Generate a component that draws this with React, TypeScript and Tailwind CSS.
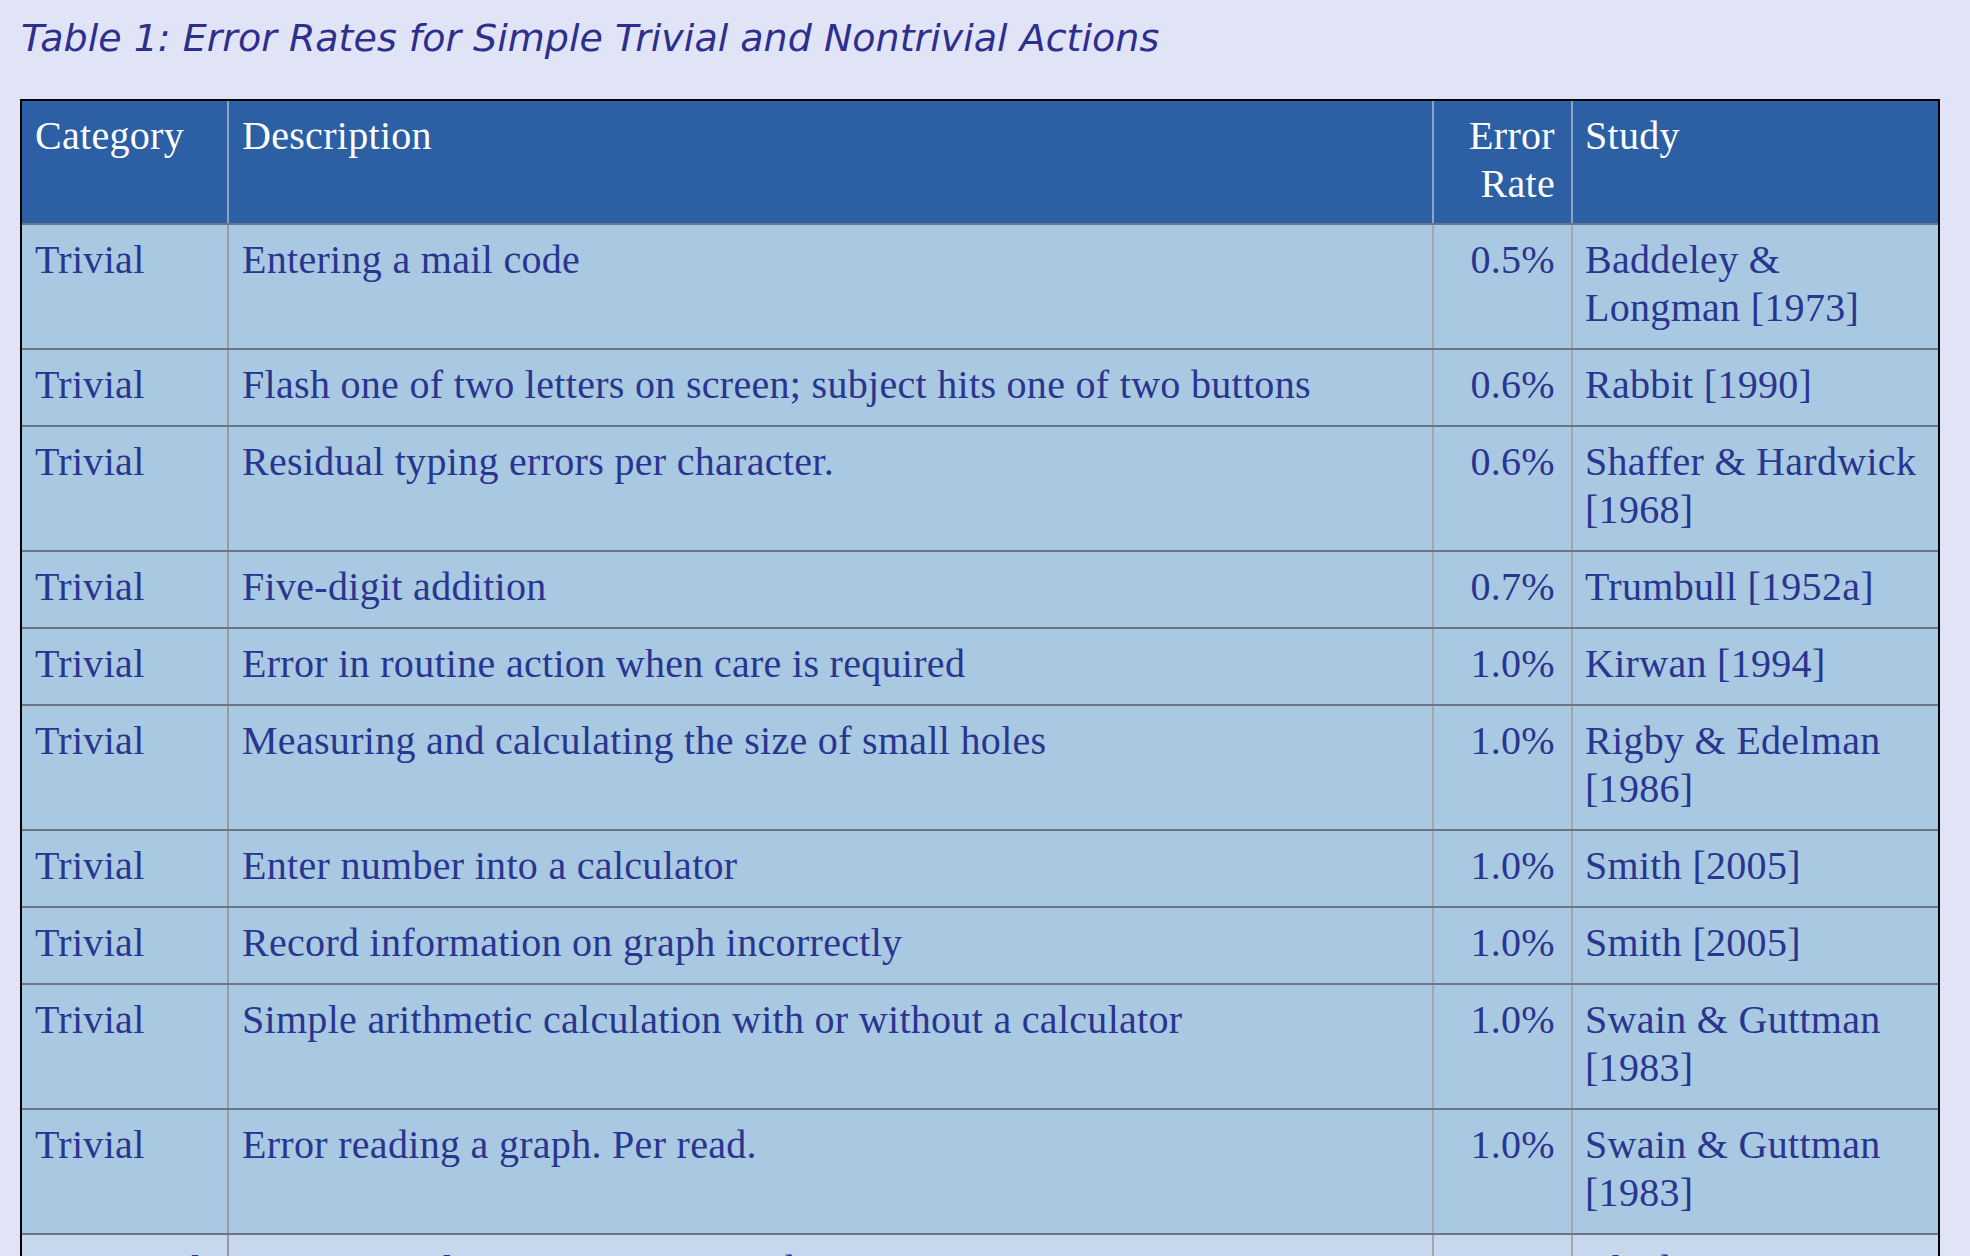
import React from "react";

type Row = { cat: string; desc: string; rate: string; study: React.ReactNode; tone?: "light" };

const rows: Row[] = [
  { cat: "Trivial", desc: "Entering a mail code", rate: "0.5%", study: <>Baddeley &amp;<br />Longman [1973]</> },
  { cat: "Trivial", desc: "Flash one of two letters on screen; subject hits one of two buttons", rate: "0.6%", study: "Rabbit [1990]" },
  { cat: "Trivial", desc: "Residual typing errors per character.", rate: "0.6%", study: <>Shaffer &amp; Hardwick<br />[1968]</> },
  { cat: "Trivial", desc: "Five-digit addition", rate: "0.7%", study: "Trumbull [1952a]" },
  { cat: "Trivial", desc: "Error in routine action when care is required", rate: "1.0%", study: "Kirwan [1994]" },
  { cat: "Trivial", desc: "Measuring and calculating the size of small holes", rate: "1.0%", study: <>Rigby &amp; Edelman<br />[1986]</> },
  { cat: "Trivial", desc: "Enter number into a calculator", rate: "1.0%", study: "Smith [2005]" },
  { cat: "Trivial", desc: "Record information on graph incorrectly", rate: "1.0%", study: "Smith [2005]" },
  { cat: "Trivial", desc: "Simple arithmetic calculation with or without a calculator", rate: "1.0%", study: <>Swain &amp; Guttman<br />[1983]</> },
  { cat: "Trivial", desc: "Error reading a graph. Per read.", rate: "1.0%", study: <>Swain &amp; Guttman<br />[1983]</> },
  { cat: "Nontrivial", desc: "Grammatical errors, one per word", rate: "1.1%", study: <>Chedru &amp;<br />Geschwind [1972]</>, tone: "light" },
];

const serif = { fontFamily: '"Liberation Serif", "Times New Roman", serif' };

export default function App() {
  return (
    <div className="min-h-[1256px] w-[1970px] overflow-hidden bg-[#e1e4f7]">
      <h1
        className="pl-[21px] pt-[16px] text-[38px] leading-[44px] italic font-normal text-[#2e2f8c]"
        style={{ fontFamily: '"DejaVu Sans", Verdana, sans-serif' }}
      >
        Table 1: Error Rates for Simple Trivial and Nontrivial Actions
      </h1>

      <div className="ml-[20px] mt-[39px] w-[1920px] border-2 border-black" style={serif}>
        <div className="grid grid-cols-[205px_1205px_139px_370px] bg-[#2c5fa3] text-[40px] leading-[48px] tracking-[0.3px] text-white">
          <div className="pl-[13px] pr-[6px] pt-[11px] pb-[15px] whitespace-nowrap">Category</div>
          <div className="border-l-2 border-[#8fa3c0] pl-[13px] pt-[11px] pb-[15px]">Description</div>
          <div className="border-l-2 border-[#8fa3c0] pr-[16px] pt-[11px] pb-[15px] text-right">
            Error
            <br />
            Rate
          </div>
          <div className="border-l-2 border-[#8fa3c0] pl-[12px] pt-[11px] pb-[15px]">Study</div>
        </div>

        {rows.map((r, i) => (
          <div
            key={i}
            className={
              "grid grid-cols-[205px_1205px_139px_370px] border-t-2 border-[#6e7386] text-[40px] leading-[48px] tracking-[0.3px] text-[#2a3590] " +
              (r.tone === "light" ? "bg-[#c6d7ee]" : "bg-[#a9c8e1]")
            }
          >
            <div className="pl-[13px] pt-[11px] pb-[16px] whitespace-nowrap">{r.cat}</div>
            <div className="border-l-2 border-[#979aa3] pl-[13px] pt-[11px] pb-[16px]">{r.desc}</div>
            <div className="border-l-2 border-[#a3a6ad] pr-[16px] pt-[11px] pb-[16px] text-right">{r.rate}</div>
            <div className="border-l-2 border-[#a3a6ad] pl-[12px] pt-[11px] pb-[16px] whitespace-nowrap">{r.study}</div>
          </div>
        ))}
      </div>
    </div>
  );
}
